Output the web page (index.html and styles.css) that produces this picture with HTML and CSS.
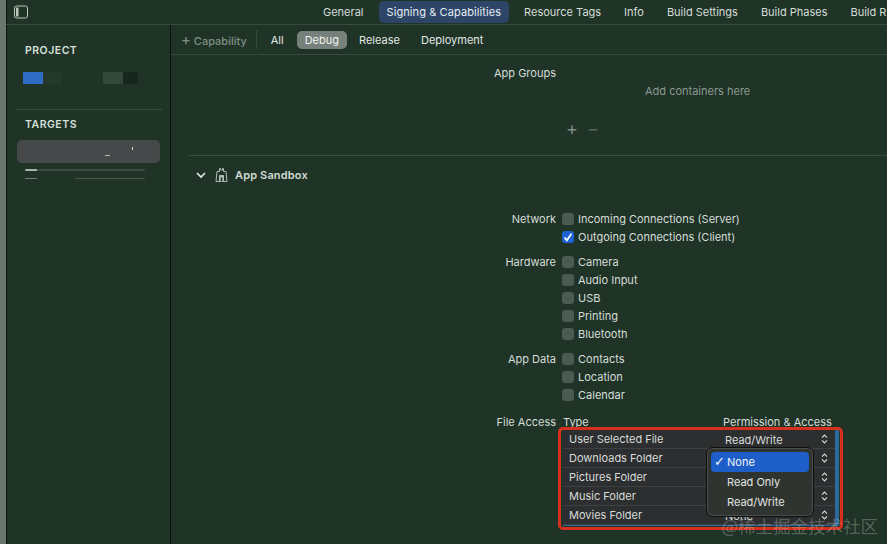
FILE: index.html
```html
<!DOCTYPE html>
<html lang="en">
<head>
    <meta charset="UTF-8">
    <meta name="viewport" content="width=device-width, initial-scale=1.0">
    <title>Signing &amp; Capabilities</title>
    <link rel="stylesheet" href="styles.css">
</head>
<body>
    <div class="window">
        <div class="top-bar">
            <svg class="panel-icon" width="14" height="14" viewBox="0 0 14 14" fill="none" stroke="#b9c7bd" stroke-width="1">
                <rect x="0.5" y="1" width="13" height="12" rx="2"/>
                <rect x="2" y="2.5" width="2.5" height="9" fill="#b9c7bd" stroke="none"/>
            </svg>
            <div class="tabs">
                <span class="tab">General</span>
                <span class="tab tab-active">Signing &amp; Capabilities</span>
                <span class="tab">Resource Tags</span>
                <span class="tab">Info</span>
                <span class="tab">Build Settings</span>
                <span class="tab">Build Phases</span>
                <span class="tab">Build Rules</span>
            </div>
        </div>
        <div class="columns">
            <div class="sidebar">
                <div class="side-title">PROJECT</div>
                <div class="project-row">
                    <span class="smear-blue"></span>
                    <span class="smear-dark"></span>
                    <span class="smear-gray"></span>
                    <span class="smear-black"></span>
                </div>
                <div class="side-line"></div>
                <div class="side-title">TARGETS</div>
                <div class="target-selected"></div>
                <div class="target-smear"></div>
                <div class="target-smear target-smear-low"></div>
            </div>
            <div class="main">
                <div class="cap-bar">
                    <span class="add-cap"><span class="add-plus">+</span> Capability</span>
                    <span class="cap-sep"></span>
                    <span class="filter">All</span>
                    <span class="filter filter-active">Debug</span>
                    <span class="filter">Release</span>
                    <span class="filter">Deployment</span>
                </div>
                <div class="groups-section">
                    <div class="groups-row">
                        <span class="groups-label">App Groups</span>
                        <span class="groups-empty">Add containers here</span>
                    </div>
                    <div class="plus-minus"><span>+</span><span class="minus">&minus;</span></div>
                </div>
                <div class="sandbox-head">
                    <svg width="10" height="8" viewBox="0 0 10 8" fill="none" stroke="#e4ebe6" stroke-width="1.6">
                        <path d="M1 2l4 4 4-4"/>
                    </svg>
                    <svg class="sandbox-icon" width="13" height="16" viewBox="0 0 13 16" fill="none" stroke="#aebdb3" stroke-width="1">
                        <path d="M1 14.5L2 4.5h2.5V1.5h1v1.5h2V1.5h1v3H11l1 10z"/>
                        <path d="M4.5 14.5V8.5h4v6" fill="#aebdb3"/>
                        <path d="M5.7 14.5V10.5h1.6v4z" fill="#1f3327" stroke="none"/>
                    </svg>
                    <span class="sandbox-title">App Sandbox</span>
                </div>
                <div class="sandbox-body">
                    <div class="opt-group">
                        <div class="opt-label">Network</div>
                        <div class="opt-list">
                            <div class="opt"><span class="check"></span>Incoming Connections (Server)</div>
                            <div class="opt"><span class="check check-on">
                                <svg width="14" height="14" viewBox="0 0 14 14" fill="none" stroke="#fff" stroke-width="1.7"><path d="M3.5 7.5l2.4 2.8 4.6-6.6"/></svg>
                            </span>Outgoing Connections (Client)</div>
                        </div>
                    </div>
                    <div class="opt-group">
                        <div class="opt-label">Hardware</div>
                        <div class="opt-list">
                            <div class="opt"><span class="check"></span>Camera</div>
                            <div class="opt"><span class="check"></span>Audio Input</div>
                            <div class="opt"><span class="check"></span>USB</div>
                            <div class="opt"><span class="check"></span>Printing</div>
                            <div class="opt"><span class="check"></span>Bluetooth</div>
                        </div>
                    </div>
                    <div class="opt-group">
                        <div class="opt-label">App Data</div>
                        <div class="opt-list">
                            <div class="opt"><span class="check"></span>Contacts</div>
                            <div class="opt"><span class="check"></span>Location</div>
                            <div class="opt"><span class="check"></span>Calendar</div>
                        </div>
                    </div>
                    <div class="opt-group file-group">
                        <div class="opt-label">File Access</div>
                        <div class="file-area">
                            <div class="file-head"><span class="type-head">Type</span><span>Permission &amp; Access</span></div>
                            <div class="file-table">
                                <div class="file-row"><span class="file-name">User Selected File</span><span class="file-perm">Read/Write</span><svg class="updown" width="7" height="10" viewBox="0 0 7 10" fill="none" stroke="#d8ded9" stroke-width="1.1"><path d="M1 3.6l2.5-2.5L6 3.6M1 6.4l2.5 2.5L6 6.4"/></svg></div>
                                <div class="file-row"><span class="file-name">Downloads Folder</span><span class="file-perm"></span><svg class="updown" width="7" height="10" viewBox="0 0 7 10" fill="none" stroke="#d8ded9" stroke-width="1.1"><path d="M1 3.6l2.5-2.5L6 3.6M1 6.4l2.5 2.5L6 6.4"/></svg></div>
                                <div class="file-row"><span class="file-name">Pictures Folder</span><span class="file-perm"></span><svg class="updown" width="7" height="10" viewBox="0 0 7 10" fill="none" stroke="#d8ded9" stroke-width="1.1"><path d="M1 3.6l2.5-2.5L6 3.6M1 6.4l2.5 2.5L6 6.4"/></svg></div>
                                <div class="file-row"><span class="file-name">Music Folder</span><span class="file-perm"></span><svg class="updown" width="7" height="10" viewBox="0 0 7 10" fill="none" stroke="#d8ded9" stroke-width="1.1"><path d="M1 3.6l2.5-2.5L6 3.6M1 6.4l2.5 2.5L6 6.4"/></svg></div>
                                <div class="file-row"><span class="file-name">Movies Folder</span><span class="file-perm">None</span><svg class="updown" width="7" height="10" viewBox="0 0 7 10" fill="none" stroke="#d8ded9" stroke-width="1.1"><path d="M1 3.6l2.5-2.5L6 3.6M1 6.4l2.5 2.5L6 6.4"/></svg></div>
                                <div class="red-box"></div>
                                <div class="perm-menu">
                                    <div class="menu-item menu-item-on"><span class="tick">&#10003;</span>None</div>
                                    <div class="menu-item">Read Only</div>
                                    <div class="menu-item">Read/Write</div>
                                </div>
                            </div>
                        </div>
                    </div>
                </div>
            </div>
        </div>
        <div class="watermark">@稀土掘金技术社区</div>
    </div>
</body>
</html>
```

FILE: styles.css
```css
* {
    box-sizing: border-box;
}

html, body {
    margin: 0;
    padding: 0;
    height: 100%;
    overflow: hidden;
}

body {
    font-family: Inter, "Liberation Sans", sans-serif;
    font-size: 11px;
    color: #dfe6e1;
    background-color: #1f3327;
}

.window {
    position: relative;
    height: 544px;
    border-left: 6px solid #6b756f;
    box-shadow: inset 1px 0 0 #0c120e;
    overflow: hidden;
}

.top-bar {
    display: flex;
    align-items: center;
    height: 25px;
    border-bottom: 1px solid #364a3d;
}

.panel-icon {
    margin-left: 8px;
    flex-shrink: 0;
}

.tabs {
    display: flex;
    align-items: center;
    margin-left: 287px;
    white-space: nowrap;
}

.tab {
    padding: 4px 8px;
    margin-right: 7px;
    color: #d5ddd7;
    border-radius: 5px;
}

.tab-active {
    background-color: #2d4668;
    color: #e6edf0;
    letter-spacing: 0.09px;
}

.columns {
    display: flex;
    height: 519px;
}

.sidebar {
    width: 165px;
    flex-shrink: 0;
    padding-top: 20px;
    border-right: 1px solid #0c120e;
}

.side-title {
    padding-left: 19px;
    font-size: 10.5px;
    font-weight: 600;
    letter-spacing: 0.5px;
    color: #d8e0da;
    line-height: 12px;
}

.project-row {
    display: flex;
    margin: 15px 0 0 17px;
    height: 12px;
}

.smear-blue {
    width: 20px;
    background-color: #2f6cc6;
}

.smear-dark {
    width: 19px;
    background-color: #25382c;
}

.smear-gray {
    width: 20px;
    margin-left: 41px;
    background-color: #33473b;
}

.smear-black {
    width: 15px;
    background-color: #17271d;
}

.side-line {
    height: 1px;
    margin: 25px 8px 9px 10px;
    background-color: #364a3d;
}

.target-selected {
    height: 23px;
    margin: 9px 10px 0 11px;
    border-radius: 5px;
    background-color: #46494a;
    background-image: linear-gradient(#d8dcd9, #d8dcd9), linear-gradient(#aeb3b0, #aeb3b0);
    background-repeat: no-repeat;
    background-size: 1px 3px, 5px 1px;
    background-position: 115px 7px, 88px 15px;
}

.target-smear {
    height: 2px;
    margin: 6px 25px 0 19px;
    border-radius: 2px;
    background-image: linear-gradient(to right, #a9b3ad 12px, #3e4d43 12px);
}

.target-smear-low {
    height: 1px;
    margin-top: 7px;
    background-image: linear-gradient(to right, #6f7d74 12px, transparent 12px, transparent 50px, #45564b 50px);
}

.main {
    flex: 1;
    min-width: 0;
}

.cap-bar {
    display: flex;
    align-items: center;
    height: 30px;
    padding-left: 10px;
    border-bottom: 1px solid #364a3d;
}

.add-cap {
    color: #7f8f85;
    font-weight: 500;
}

.add-plus {
    font-size: 15px;
    font-weight: 400;
}

.cap-sep {
    width: 1px;
    height: 19px;
    margin: 0 6px 0 9px;
    background-color: #364a3d;
}

.filter {
    padding: 2px 8px;
    margin-right: 5px;
    color: #e2e8e3;
    border-radius: 5px;
}

.filter-active {
    background-color: #77817b;
    color: #eef1ee;
    margin-right: 4px;
}

.groups-section {
    height: 101px;
    margin-left: 18px;
    border-bottom: 1px solid #384c40;
}

.groups-row {
    height: 50px;
}

.groups-label {
    display: block;
    padding: 11px 0 0 305px;
    line-height: 14px;
    color: #d5ddd7;
}

.groups-empty {
    display: block;
    padding: 4px 0 0 456px;
    line-height: 14px;
    color: #8c9a91;
}

.plus-minus {
    display: flex;
    gap: 9px;
    padding: 16px 0 0 377px;
    font-size: 18px;
    line-height: 16px;
    color: #7f8f85;
}

.minus {
    color: #566a5d;
}

.sandbox-head {
    display: flex;
    align-items: center;
    height: 38px;
    padding-left: 25px;
}

.sandbox-icon {
    margin-left: 9px;
}

.sandbox-title {
    margin-left: 7px;
    font-weight: 600;
    letter-spacing: 0.15px;
    color: #cfdad2;
}

.sandbox-body {
    padding-top: 16px;
}

.opt-group {
    display: flex;
    margin-bottom: 7px;
}

.opt-label {
    width: 391px;
    padding-right: 6px;
    text-align: right;
    line-height: 18px;
    flex-shrink: 0;
    color: #d5ddd7;
}

.opt-list {
    flex: 1;
}

.opt {
    display: flex;
    align-items: center;
    height: 18px;
    color: #d5ddd7;
}

.check {
    display: block;
    width: 12px;
    height: 12px;
    margin-right: 4px;
    border-radius: 3px;
    background-color: #4a5b50;
}

.check-on {
    background-color: #1f62d6;
}

.check-on svg {
    display: block;
    margin: -1px;
}

.file-group {
    margin-top: 9px;
}

.file-area {
    flex: 1;
    padding-left: 1px;
}

.file-head {
    display: flex;
    height: 17px;
    line-height: 18px;
    color: #d5ddd7;
}

.type-head {
    width: 160px;
}

.file-table {
    position: relative;
    width: 276px;
    border-right: 4px solid #2b6a9a;
    border-bottom: 1px solid #2b6a9a;
    background-color: #2c2e2f;
}

.file-row {
    display: flex;
    align-items: center;
    height: 19px;
    padding-left: 6px;
    border-bottom: 1px solid #3e4143;
    color: #d8dcd9;
}

.file-row:last-of-type {
    border-bottom: none;
}

.file-name {
    width: 156px;
}

.file-perm {
    width: 96px;
    margin-top: 2px;
}

.red-box {
    position: absolute;
    top: -3px;
    left: -5px;
    width: 285px;
    height: 103px;
    border: 3px solid #d7301f;
    border-radius: 5px;
}

.perm-menu {
    position: absolute;
    top: 17px;
    left: 143px;
    width: 108px;
    height: 70px;
    padding: 4px;
    background-color: #2f3431;
    border: 1px solid #0e0f0e;
    border-radius: 7px;
    box-shadow: inset 0 0 0 1px #4b4f4c;
}

.menu-item {
    position: relative;
    height: 20px;
    padding-left: 16px;
    line-height: 20px;
    color: #e2e5e2;
}

.menu-item-on {
    background-color: #1d5ec9;
    border-radius: 4px;
    color: #f4f6f8;
}

.tick {
    position: absolute;
    left: 3px;
    top: 0;
    font-family: "DejaVu Sans", sans-serif;
    font-size: 13px;
}

.watermark {
    position: absolute;
    right: 9px;
    bottom: 8px;
    font-family: "Noto Sans CJK SC", sans-serif;
    font-size: 17.5px;
    line-height: 20px;
    color: rgba(200, 210, 205, 0.32);
}
```
